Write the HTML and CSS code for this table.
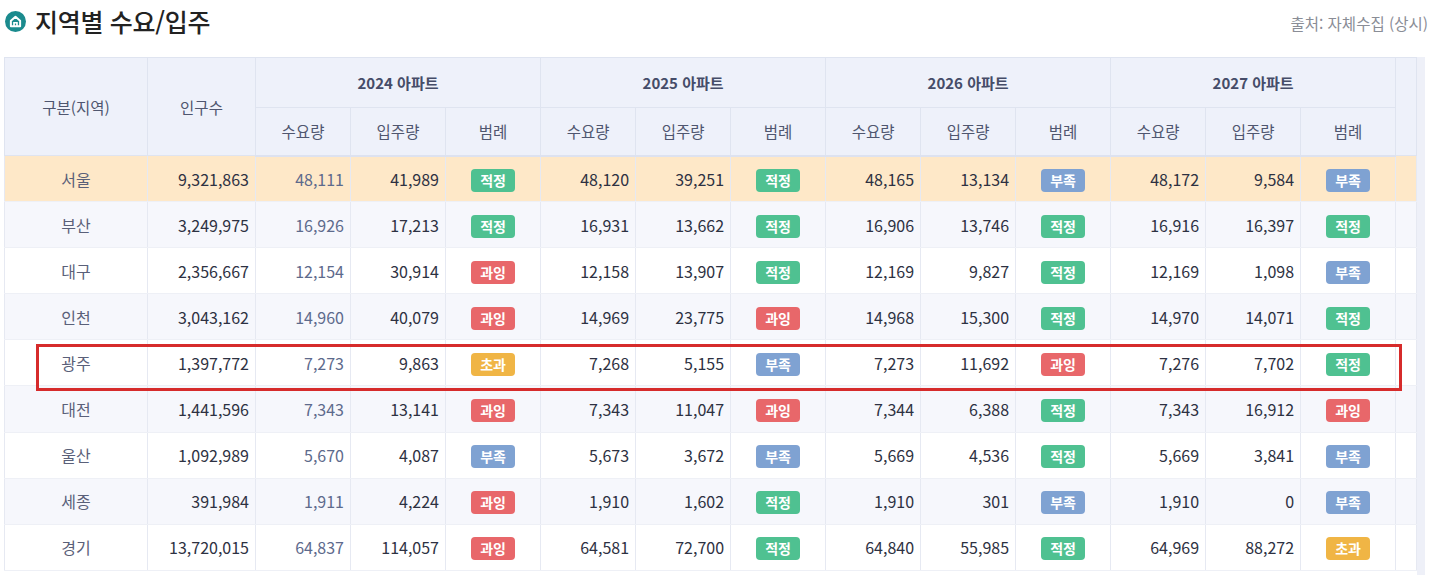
FILE: index.html
```html
<!DOCTYPE html>
<html lang="ko">
<head>
<meta charset="utf-8">
<title>지역별 수요/입주</title>
<link rel="stylesheet" href="styles.css">
</head>
<body>
<div class="page">
  <div class="title-row">
    <div class="title">
      <span class="icon">
        <svg width="21" height="21" viewBox="0 0 20 20">
          <circle cx="10" cy="10" r="10" fill="#1b8b8e"/>
          <path d="M5.6 14.6 V9.2 L10 5.4 L14.4 9.2 V14.6 Z" fill="none" stroke="#fff" stroke-width="1.9" stroke-linejoin="round"/>
          <path d="M8.6 14.6 V11.2 H11.4 V14.6" fill="none" stroke="#fff" stroke-width="1.6"/>
        </svg>
      </span>
      <h1>지역별 수요/입주</h1>
    </div>
    <div class="source">출처: 자체수집 (상시)</div>
  </div>

  <div class="table-wrap">
    <table class="grid">
      <colgroup>
        <col class="c-region"><col class="c-pop">
        <col class="c-n"><col class="c-n"><col class="c-n">
        <col class="c-n"><col class="c-n"><col class="c-n">
        <col class="c-n"><col class="c-n"><col class="c-n">
        <col class="c-n"><col class="c-n"><col class="c-n">
        <col class="c-gutter">
      </colgroup>
      <thead>
        <tr class="h1">
          <th rowspan="2">구분(지역)</th>
          <th rowspan="2">인구수</th>
          <th colspan="3" class="year">2024 아파트</th>
          <th colspan="3" class="year">2025 아파트</th>
          <th colspan="3" class="year">2026 아파트</th>
          <th colspan="3" class="year">2027 아파트</th>
          <th rowspan="2"></th>
        </tr>
        <tr class="h2">
          <th>수요량</th><th>입주량</th><th>범례</th>
          <th>수요량</th><th>입주량</th><th>범례</th>
          <th>수요량</th><th>입주량</th><th>범례</th>
          <th>수요량</th><th>입주량</th><th>범례</th>
        </tr>
      </thead>
      <tbody>
        <tr class="hl">
          <td class="region">서울</td><td class="num">9,321,863</td>
          <td class="num soft">48,111</td><td class="num">41,989</td><td class="lg"><span class="b ok">적정</span></td>
          <td class="num">48,120</td><td class="num">39,251</td><td class="lg"><span class="b ok">적정</span></td>
          <td class="num">48,165</td><td class="num">13,134</td><td class="lg"><span class="b low">부족</span></td>
          <td class="num">48,172</td><td class="num">9,584</td><td class="lg"><span class="b low">부족</span></td>
          <td></td>
        </tr>
        <tr class="alt">
          <td class="region">부산</td><td class="num">3,249,975</td>
          <td class="num soft">16,926</td><td class="num">17,213</td><td class="lg"><span class="b ok">적정</span></td>
          <td class="num">16,931</td><td class="num">13,662</td><td class="lg"><span class="b ok">적정</span></td>
          <td class="num">16,906</td><td class="num">13,746</td><td class="lg"><span class="b ok">적정</span></td>
          <td class="num">16,916</td><td class="num">16,397</td><td class="lg"><span class="b ok">적정</span></td>
          <td></td>
        </tr>
        <tr>
          <td class="region">대구</td><td class="num">2,356,667</td>
          <td class="num soft">12,154</td><td class="num">30,914</td><td class="lg"><span class="b over">과잉</span></td>
          <td class="num">12,158</td><td class="num">13,907</td><td class="lg"><span class="b ok">적정</span></td>
          <td class="num">12,169</td><td class="num">9,827</td><td class="lg"><span class="b ok">적정</span></td>
          <td class="num">12,169</td><td class="num">1,098</td><td class="lg"><span class="b low">부족</span></td>
          <td></td>
        </tr>
        <tr class="alt">
          <td class="region">인천</td><td class="num">3,043,162</td>
          <td class="num soft">14,960</td><td class="num">40,079</td><td class="lg"><span class="b over">과잉</span></td>
          <td class="num">14,969</td><td class="num">23,775</td><td class="lg"><span class="b over">과잉</span></td>
          <td class="num">14,968</td><td class="num">15,300</td><td class="lg"><span class="b ok">적정</span></td>
          <td class="num">14,970</td><td class="num">14,071</td><td class="lg"><span class="b ok">적정</span></td>
          <td></td>
        </tr>
        <tr>
          <td class="region">광주</td><td class="num">1,397,772</td>
          <td class="num soft">7,273</td><td class="num">9,863</td><td class="lg"><span class="b exc">초과</span></td>
          <td class="num">7,268</td><td class="num">5,155</td><td class="lg"><span class="b low">부족</span></td>
          <td class="num">7,273</td><td class="num">11,692</td><td class="lg"><span class="b over">과잉</span></td>
          <td class="num">7,276</td><td class="num">7,702</td><td class="lg"><span class="b ok">적정</span></td>
          <td></td>
        </tr>
        <tr class="alt">
          <td class="region">대전</td><td class="num">1,441,596</td>
          <td class="num soft">7,343</td><td class="num">13,141</td><td class="lg"><span class="b over">과잉</span></td>
          <td class="num">7,343</td><td class="num">11,047</td><td class="lg"><span class="b over">과잉</span></td>
          <td class="num">7,344</td><td class="num">6,388</td><td class="lg"><span class="b ok">적정</span></td>
          <td class="num">7,343</td><td class="num">16,912</td><td class="lg"><span class="b over">과잉</span></td>
          <td></td>
        </tr>
        <tr>
          <td class="region">울산</td><td class="num">1,092,989</td>
          <td class="num soft">5,670</td><td class="num">4,087</td><td class="lg"><span class="b low">부족</span></td>
          <td class="num">5,673</td><td class="num">3,672</td><td class="lg"><span class="b low">부족</span></td>
          <td class="num">5,669</td><td class="num">4,536</td><td class="lg"><span class="b ok">적정</span></td>
          <td class="num">5,669</td><td class="num">3,841</td><td class="lg"><span class="b low">부족</span></td>
          <td></td>
        </tr>
        <tr class="alt">
          <td class="region">세종</td><td class="num">391,984</td>
          <td class="num soft">1,911</td><td class="num">4,224</td><td class="lg"><span class="b over">과잉</span></td>
          <td class="num">1,910</td><td class="num">1,602</td><td class="lg"><span class="b ok">적정</span></td>
          <td class="num">1,910</td><td class="num">301</td><td class="lg"><span class="b low">부족</span></td>
          <td class="num">1,910</td><td class="num">0</td><td class="lg"><span class="b low">부족</span></td>
          <td></td>
        </tr>
        <tr>
          <td class="region">경기</td><td class="num">13,720,015</td>
          <td class="num soft">64,837</td><td class="num">114,057</td><td class="lg"><span class="b over">과잉</span></td>
          <td class="num">64,581</td><td class="num">72,700</td><td class="lg"><span class="b ok">적정</span></td>
          <td class="num">64,840</td><td class="num">55,985</td><td class="lg"><span class="b ok">적정</span></td>
          <td class="num">64,969</td><td class="num">88,272</td><td class="lg"><span class="b exc">초과</span></td>
          <td></td>
        </tr>
      </tbody>
    </table>
    <div class="scroll-track"></div>
    <div class="focus-box"></div>
  </div>
</div>
</body>
</html>
```

FILE: styles.css
```css
* { box-sizing: border-box; }
html, body { margin: 0; padding: 0; background: #fff; }
body {
  font-family: "Noto Sans CJK KR", "Noto Sans", sans-serif;
  color: #333;
  overflow: hidden;
}
.page { padding: 0 6px 0 4px; }

.title-row {
  height: 57px;
  display: flex;
  align-items: center;
  justify-content: space-between;
  padding-bottom: 14px;
}
.title { display: flex; align-items: center; gap: 9px; padding-left: 1px; }
.icon { display: flex; flex: none; width: 21px; height: 21px; }
.icon svg { display: block; width: 21px; height: 21px; }
.title h1 {
  margin: 0;
  font-size: 25px;
  font-weight: 500;
  color: #222;
  letter-spacing: -0.3px;
  line-height: 1;
}
.source {
  font-size: 15.5px;
  color: #8a8d96;
  padding-top: 2px;
}

.table-wrap {
  position: relative;
  display: flex;
  align-items: flex-start;
  width: 1421px;
  height: 518px;
  overflow: hidden;
}
.grid {
  border-collapse: collapse;
  table-layout: fixed;
  width: 1412px;
  flex: none;
}
.c-region { width: 143px; }
.c-pop { width: 108px; }
.c-n { width: 95px; }
.c-gutter { width: 21px; }

.grid th {
  background: #eef1fa;
  border: 1px solid #dfe4f0;
  color: #4f566f;
  font-weight: 400;
  font-size: 15.5px;
  padding: 0;
}
.grid tr.h1 th { height: 50px; }
.grid tr.h2 th { height: 48px; border-bottom: 2px solid #dde2f0; }
.grid th.year { font-weight: 700; color: #454c68; font-size: 15px; }

.grid td {
  height: 46.1px;
  border-left: 1px solid #e6e9f2;
  border-right: 1px solid #e6e9f2;
  border-bottom: 1px solid #eef0f6;
  font-size: 16px;
  color: #2d3142;
  padding: 0;
  background: #fff;
}
.grid tr.alt td { background: #f6f7fc; }
.grid tr.hl td { background: #fee8c8; }

.grid td.region { text-align: center; color: #5a6079; }
.grid td.num { text-align: right; padding-right: 6px; }
.grid td.soft { color: #5d6a8c; }
.grid td.lg { text-align: center; }

.b {
  display: inline-block;
  width: 44px;
  height: 23px;
  line-height: 23px;
  border-radius: 4px;
  color: #fff;
  font-size: 14px;
  font-weight: 700;
  text-align: center;
  vertical-align: middle;
}
.b.ok { background: #4fc191; }
.b.over { background: #e8676a; }
.b.low { background: #7fa2d2; }
.b.exc { background: #f0b545; }

.scroll-track {
  align-self: stretch;
  flex: 1;
  background: #eef0f8;
}

.focus-box {
  position: absolute;
  left: 32px;
  top: 287px;
  width: 1366px;
  height: 47px;
  border: 3px solid #d62b2b;
  pointer-events: none;
}
```
